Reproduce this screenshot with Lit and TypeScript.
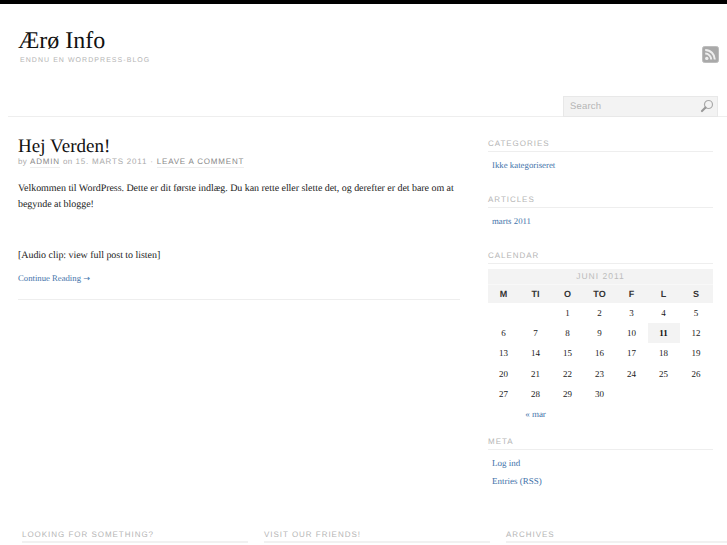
import { LitElement, html, css } from "lit";
import { customElement } from "lit/decorators.js";

const WEEKS: (number | null)[][] = [
  [null, null, 1, 2, 3, 4, 5],
  [6, 7, 8, 9, 10, 11, 12],
  [13, 14, 15, 16, 17, 18, 19],
  [20, 21, 22, 23, 24, 25, 26],
  [27, 28, 29, 30, null, null, null],
];

@customElement("app-root")
export class AppRoot extends LitElement {
  static styles = css`
    :host { display: block; height: 545px; overflow: hidden; background: #fff; color: #222; font-family: "Liberation Serif", serif; border-top: 4px solid #000; box-sizing: border-box; text-rendering: geometricPrecision; }
    a { color: #4474aa; text-decoration: none; }
    header { height: 113px; margin-left: 8px; border-bottom: 1px solid #eee; box-sizing: border-box; position: relative; padding: 23px 0 0 10px; }
    h1 { margin: 0; font-size: 24px; line-height: 28px; font-weight: 400; color: #111; }
    .tag { font: 7px/10px "Liberation Sans", sans-serif; letter-spacing: 1.05px; color: #b5b5b5; margin: 1px 0 0 2px; }
    .rss { position: absolute; left: 694px; top: 42px; width: 17px; height: 17px; display: block; }
    .search { position: absolute; left: 555px; top: 92px; width: 155px; height: 21px; box-sizing: border-box; background: #f3f3f3; border: 1px solid #e8e8e8; display: flex; align-items: center; justify-content: space-between; padding: 0 3px 2px 6px; font: 9.5px "Liberation Sans", sans-serif; letter-spacing: .2px; color: #b5b5b5; }
    .search span { margin-top: 2px; }
    .body { display: flex; padding-left: 18px; height: 412px; }
    main { width: 442px; height: 183px; border-bottom: 1px solid #eee; box-sizing: border-box; padding-top: 20px; }
    h2 { margin: 0 0 -1px; font-size: 19px; line-height: 20px; font-weight: 400; letter-spacing: .04px; color: #111; }
    .meta { font: 8px/11px "Liberation Sans", sans-serif; letter-spacing: .8px; color: #aaa; height: 12px; }
    .meta .by { letter-spacing: .3px; }
    .meta b { font-weight: 400; color: #888; display: inline-block; border-bottom: 1px solid #eee; }
    p { margin: 0; font-size: 10px; line-height: 16px; color: #222; letter-spacing: -.045px; }
    .text { margin-top: 13px; }
    .clip { margin-top: 35px; }
    .more { display: block; font-size: 8.7px; line-height: 12px; margin-top: 8px; }
    .arrow { font: 8px/0 "DejaVu Sans", sans-serif; }
    aside { width: 225px; margin-left: 28px; padding-top: 21px; }
    .wt { font: 8px/11px "Liberation Sans", sans-serif; letter-spacing: .97px; color: #b5b5b5; border-bottom: 1px solid #eee; padding-bottom: 2px; text-transform: uppercase; }
    .li { font-size: 8.8px; line-height: 18px; padding-left: 4px; display: block; }
    .w { margin-bottom: 20px; }
    .w .wt { margin-bottom: 4px; }
    .w.cal { margin-bottom: 12px; }
    .w.cal .wt { margin-bottom: 5px; }
    .big { font-size: 9px; }
    table { width: 225px; border-collapse: collapse; table-layout: fixed; font-size: 9px; color: #222; }
    caption { background: #f3f3f3; font: 8.5px/15px "Liberation Sans", sans-serif; letter-spacing: 1px; color: #bbb; text-align: center; border-bottom: 1px solid #f8f8f8; }
    th { box-sizing: border-box; width: 32px; background: #f3f3f3; font: 700 9px/18px "Liberation Sans", sans-serif; color: #333; padding: 0 1px 0 0; }
    th:last-child { width: 33px; }
    td { box-sizing: border-box; text-align: center; height: 20.2px; padding: 0 1px 0 0; line-height: 20px; }
    td.today { background: #f3f3f3; font-weight: 700; color: #111; }
    .foot { display: flex; gap: 16px; padding-left: 22px; }
    .foot .wt { flex: none; width: 226px; padding-bottom: 1px; border-bottom-width: 2px; border-color: #f1f1f1; }
  `;

  render() {
    return html`
      <header>
        <h1>Ærø Info</h1>
        <div class="tag">ENDNU EN WORDPRESS-BLOG</div>
        <svg class="rss" viewBox="0 0 17 17">
          <rect x=".5" y=".5" width="16" height="16" rx="2" fill="#a9a9a9" stroke="#bdbdbd"/>
          <circle cx="4.8" cy="12.4" r="1.7" fill="#eee"/>
          <path d="M3.2 7.6a6 6 0 0 1 6 6M3.2 4a9.6 9.6 0 0 1 9.6 9.6" fill="none" stroke="#eee" stroke-width="2"/>
        </svg>
        <div class="search">
          <span>Search</span>
          <svg width="14" height="14" viewBox="0 0 14 14"><circle cx="8.5" cy="5.5" r="4" fill="none" stroke="#aaa" stroke-width="1.2"/><path d="M5.5 8.5L2 12" stroke="#999" stroke-width="2.2" stroke-linecap="round"/></svg>
        </div>
      </header>
      <div class="body">
        <main>
          <h2>Hej Verden!</h2>
          <div class="meta"><span class="by">by</span> <b>ADMIN</b> <span class="by">on</span> 15. MARTS 2011 · <b>LEAVE A COMMENT</b></div>
          <p class="text">Velkommen til WordPress. Dette er dit første indlæg. Du kan rette eller slette det, og derefter er det bare om at begynde at blogge!</p>
          <p class="clip">[Audio clip: view full post to listen]</p>
          <a class="more" href="#">Continue Reading <span class="arrow">→</span></a>
        </main>
        <aside>
          <div class="w"><div class="wt">Categories</div><a class="li" href="#">Ikke kategoriseret</a></div>
          <div class="w"><div class="wt">Articles</div><a class="li" href="#">marts 2011</a></div>
          <div class="w cal">
            <div class="wt">Calendar</div>
            <table>
              <caption>JUNI 2011</caption>
              <tr>${["M", "TI", "O", "TO", "F", "L", "S"].map((d) => html`<th>${d}</th>`)}</tr>
              ${WEEKS.map((w) => html`<tr>${w.map((d) => html`<td class=${d === 11 ? "today" : ""}>${d ?? ""}</td>`)}</tr>`)}
              <tr><td colspan="3"><a href="#">« mar</a></td><td colspan="4"></td></tr>
            </table>
          </div>
          <div class="w"><div class="wt">Meta</div><a class="li big" href="#">Log ind</a><a class="li big" href="#">Entries (RSS)</a></div>
        </aside>
      </div>
      <div class="foot">
        <div class="wt">Looking for something?</div>
        <div class="wt">Visit our friends!</div>
        <div class="wt">Archives</div>
      </div>
    `;
  }
}
